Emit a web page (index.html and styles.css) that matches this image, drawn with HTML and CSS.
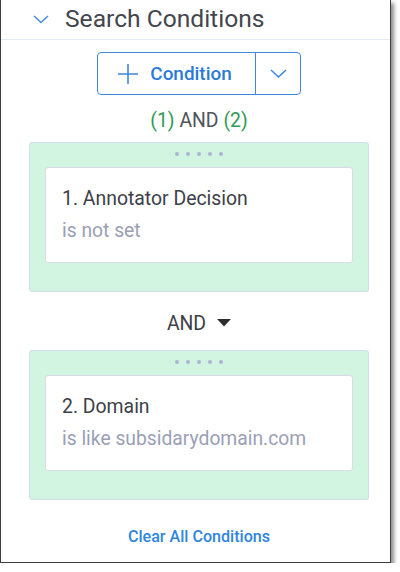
FILE: index.html
```html
<!DOCTYPE html>
<html lang="en">
<head>
  <meta charset="UTF-8">
  <title>Search Conditions</title>
  <link rel="stylesheet" href="styles.css">
</head>
<body>
  <div class="panel">
    <div class="panel-header">
      <svg class="collapse-icon" width="16" height="9" viewBox="0 0 16 9">
        <path d="M1 1 L8 7.5 L15 1" fill="none" stroke="#4a8fe0" stroke-width="1.6"/>
      </svg>
      <span class="panel-title">Search Conditions</span>
    </div>

    <div class="panel-body">
      <div class="add-group">
        <button class="add-btn">
          <svg width="22" height="22" viewBox="0 0 22 22">
            <path d="M11 1 V21 M1 11 H21" stroke="#3d87e0" stroke-width="1.6"/>
          </svg>
          <span>Condition</span>
        </button>
        <button class="add-menu">
          <svg width="17" height="9" viewBox="0 0 17 9">
            <path d="M1 1 L8.5 8 L16 1" fill="none" stroke="#3d87e0" stroke-width="1.5"/>
          </svg>
        </button>
      </div>

      <div class="logic">
        <span class="ref">(1)</span> AND <span class="ref">(2)</span>
      </div>

      <div class="cond-group first">
        <div class="grip"><i></i><i></i><i></i><i></i><i></i></div>
        <div class="cond-card">
          <div class="cond-name">1. Annotator Decision</div>
          <div class="cond-value">is not set</div>
        </div>
      </div>

      <div class="operator">
        <span>AND</span>
        <svg width="14" height="8" viewBox="0 0 14 8">
          <path d="M0 0 H14 L7 7.5 Z" fill="#2b2d31"/>
        </svg>
      </div>

      <div class="cond-group">
        <div class="grip"><i></i><i></i><i></i><i></i><i></i></div>
        <div class="cond-card">
          <div class="cond-name">2. Domain</div>
          <div class="cond-value">is like subsidarydomain.com</div>
        </div>
      </div>

      <a class="clear-link" href="#">Clear All Conditions</a>
    </div>
  </div>
</body>
</html>
```

FILE: styles.css
```css
body {
  margin: 0;
  background: #ffffff;
  font-family: Roboto, "Liberation Sans", sans-serif;
}

.panel {
  width: 389px;
  height: 562px;
  border: 1px solid #3e3e3e;
  border-top: none;
  background: #ffffff;
  box-shadow: 3px 3px 4px rgba(0, 0, 0, 0.45);
}

.panel-header {
  height: 40px;
  border-bottom: 1px solid #e2ebf5;
  display: flex;
  align-items: center;
  padding-left: 32px;
  box-sizing: border-box;
}

.collapse-icon {
  margin-top: -1px;
}

.panel-title {
  margin-left: 16px;
  margin-top: -3px;
  font-size: 24.6px;
  color: #43464d;
}

.panel-body {
  padding: 0 21px 0 28px;
  display: flex;
  flex-direction: column;
  align-items: center;
}

.add-group {
  display: flex;
  margin-top: 12px;
  border: 1px solid #3d87e0;
  border-radius: 4px;
  height: 41px;
}

.add-group button {
  background: none;
  border: none;
  padding: 0;
  display: flex;
  align-items: center;
  justify-content: center;
  font-family: inherit;
}

.add-btn {
  width: 158px;
  gap: 11px;
  border-right: 1px solid #3d87e0 !important;
  font-size: 18.9px;
  color: #2a7ad8;
  font-weight: 500;
}

.add-btn svg {
  margin-left: -4px;
}

.add-menu {
  width: 44px;
}

.logic {
  margin-top: 13px;
  font-size: 19.4px;
  color: #50535a;
  line-height: 26px;
}

.ref {
  color: #2f9a55;
}

.cond-group {
  width: 340px;
  box-sizing: border-box;
  margin-top: 14px;
  background: #d1f5e1;
  border: 1px solid #d3dcea;
  border-radius: 3px;
  padding: 0 15px 28px;
}

.cond-group.first {
  margin-top: 8px;
}

.grip {
  display: flex;
  justify-content: center;
  gap: 7px;
  padding: 9px 0 11px;
}

.grip i {
  width: 4px;
  height: 4px;
  border-radius: 50%;
  background: #a9b4d2;
}

.cond-card {
  background: #ffffff;
  border: 1px solid #d7dce8;
  border-radius: 3px;
  height: 96px;
  box-sizing: border-box;
  padding: 18px 16px 0;
}

.cond-name {
  font-size: 19.4px;
  color: #3d4048;
  line-height: 26px;
}

.cond-value {
  margin-top: 6px;
  font-size: 19.3px;
  color: #9aa0b6;
  line-height: 26px;
}

.operator {
  display: flex;
  align-items: center;
  gap: 11px;
  margin-top: 18px;
  height: 26px;
  font-size: 19.4px;
  color: #3c3f46;
}

.clear-link {
  margin-top: 27px;
  font-size: 16.1px;
  color: #2e86de;
  text-decoration: none;
  font-weight: 500;
}
```
